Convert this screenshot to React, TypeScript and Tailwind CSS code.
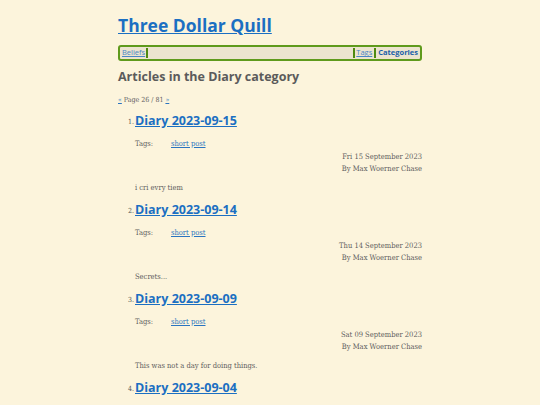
const posts = [
  { n: 1, title: "Diary 2023-09-15", date: "Fri 15 September 2023", excerpt: "i cri evry tiem" },
  { n: 2, title: "Diary 2023-09-14", date: "Thu 14 September 2023", excerpt: "Secrets..." },
  { n: 3, title: "Diary 2023-09-09", date: "Sat 09 September 2023", excerpt: "This was not a day for doing things." },
  { n: 4, title: "Diary 2023-09-04", date: "Mon 04 September 2023", excerpt: "Nothing much." },
]

const sans = "font-['Open_Sans',sans-serif]"
const slab = "font-['DejaVu_Serif_Condensed','DejaVu_Serif',serif]"

function Post({ n, title, date, excerpt }: (typeof posts)[number]) {
  return (
    <li className="flex h-[89px]">
      <span className={`${slab} w-[17px] shrink-0 pt-[6px] pr-[1px] text-right text-[7px] text-[#555]`}>{n}.</span>
      <div className="flex-1">
        <a href="#" className={`${sans} block text-[12.5px] font-bold leading-[20px] text-[#1b6fc2] underline`}>
          {title}
        </a>
        <div className={`${slab} mt-[8px] flex text-[7.5px] leading-[10px] text-[#5e5e5e]`}>
          <span className="w-[36px]">Tags:</span>
          <a href="#" className="text-[#2a74c0] underline">short post</a>
        </div>
        <div className={`${slab} mt-[2px] text-right text-[7.5px] leading-[12px] text-[#5e5e5e]`}>
          <div>{date}</div>
          <div>By Max Woerner Chase</div>
        </div>
        <p className={`${slab} mt-[8px] text-[7.5px] leading-[10px] text-[#5e5e5e]`}>{excerpt}</p>
      </div>
    </li>
  )
}

export default function App() {
  return (
    <div className="min-h-[405px] w-full overflow-hidden bg-[#fcf4dc]">
      <div className="mx-auto w-[304px] pt-[13px]">
        <a href="#" className={`${sans} block text-[17.5px] font-bold leading-[24px] text-[#1b6fc2] underline`}>
          Three Dollar Quill
        </a>
        <nav className={`${sans} mt-[8px] flex h-[16px] items-center rounded-[3px] border-2 border-[#5f9a1c] bg-[#ece4cf] px-[2px] text-[7.5px]`}>
          <a href="#" className="text-[#4a86c5] underline">Beliefs</a>
          <span className="mx-[1px] h-[10px] w-[2px] bg-[#4f8a10]" />
          <span className="flex-1" />
          <span className="mx-[1px] h-[10px] w-[2px] bg-[#4f8a10]" />
          <a href="#" className="text-[#4a86c5] underline">Tags</a>
          <span className="mx-[2px] h-[10px] w-[2px] bg-[#4f8a10]" />
          <a href="#" className="font-bold text-[#1b5fa8]">Categories</a>
        </nav>
        <h2 className={`${sans} mt-[7px] text-[12.5px] font-bold leading-[18px] text-[#5b5b5b]`}>
          Articles in the Diary category
        </h2>
        <p className={`${slab} mt-[9px] text-[7px] leading-[10px] text-[#5e5e5e]`}>
          <a href="#" className="text-[#2a74c0] underline">«</a> Page 26 / 81{" "}
          <a href="#" className="text-[#2a74c0] underline">»</a>
        </p>
        <ol className="mt-[6px]">
          {posts.map((p) => (
            <Post key={p.n} {...p} />
          ))}
        </ol>
      </div>
    </div>
  )
}
